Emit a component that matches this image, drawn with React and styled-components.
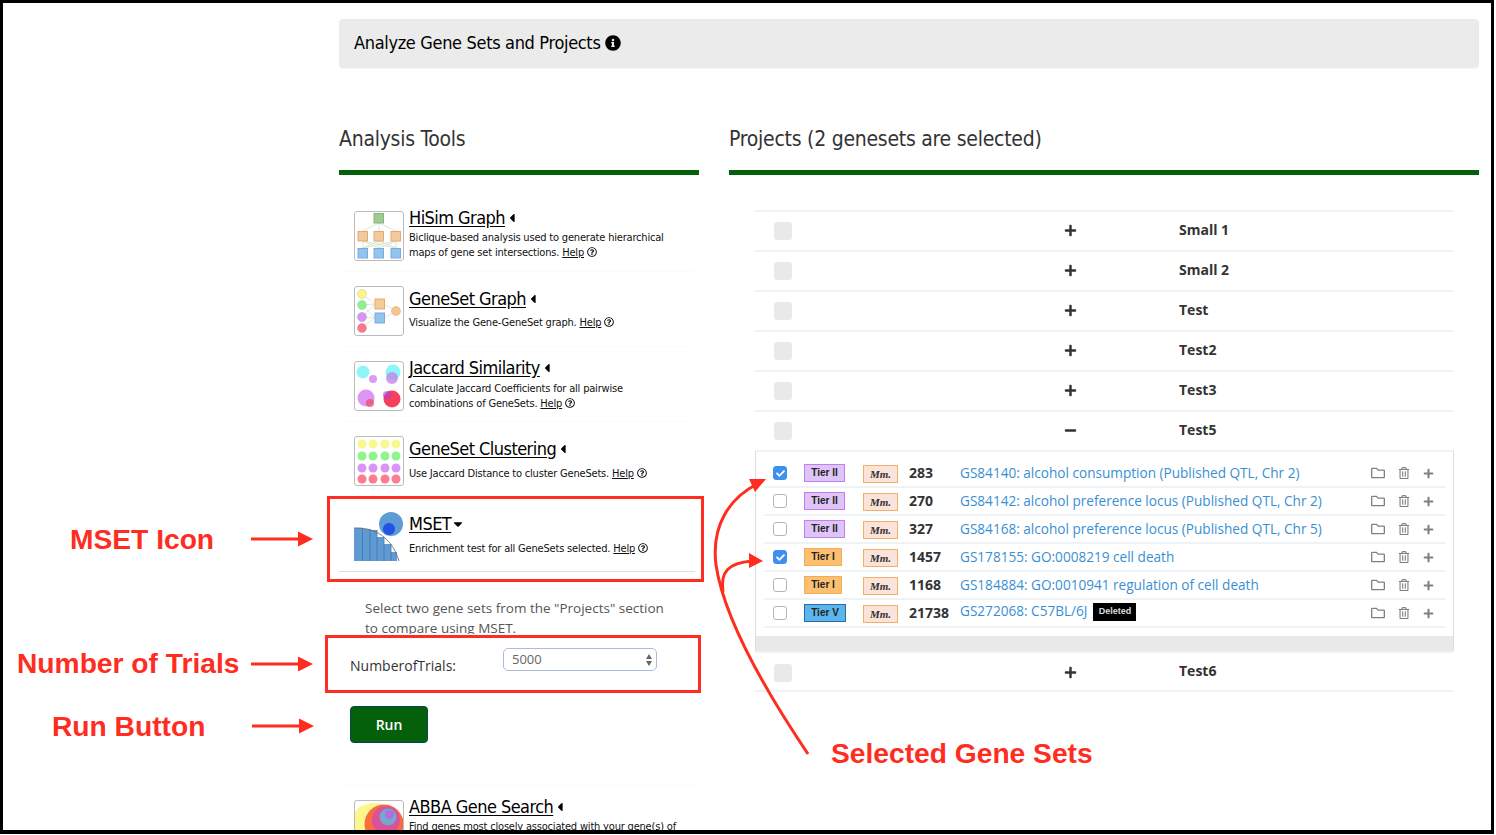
import React from "react";
import styled, { createGlobalStyle } from "styled-components";
import { FaInfoCircle, FaPlus, FaMinus, FaRegFolder, FaRegTrashAlt, FaCaretLeft, FaCaretDown, FaRegQuestionCircle, FaCheck } from "react-icons/fa";

const GlobalStyle = createGlobalStyle`
  html, body {
    margin: 0;
    padding: 0;
    background: #fff;
    overflow: hidden;
    font-family: "Open Sans", "Liberation Sans", sans-serif;
  }
  * { box-sizing: border-box; }
`;

const HEAD_FONT = `"DejaVu Sans Condensed", "DejaVu Sans", sans-serif`;
const GREEN = "#05600c";
const RED = "#ff2d1f";
const LINE = "#f0f3f6";

const tierColors = {
  "Tier I": { bg: "#fdc071", border: "#f0ad55", width: 38 },
  "Tier II": { bg: "#dfc4f7", border: "#c07ef0", width: 41 },
  "Tier V": { bg: "#5cb6ee", border: "#2f6aa5", width: 42 },
};

const Frame = styled.div`
  position: relative;
  width: 1494px;
  height: 834px;
  border: 3px solid #000;
  border-bottom-width: 4px;
  overflow: hidden;
  background: #fff;
`;

const Main = styled.main`
  width: 1140px;
  margin-left: 336px;
  padding-top: 16px;
`;

const Well = styled.div`
  display: flex;
  align-items: center;
  gap: 4px;
  height: 49px;
  padding: 0 0 2px 15px;
  background: #ebebeb;
  border-radius: 4px;
  box-shadow: 0 1px 1px rgba(0, 0, 0, 0.05);
  font-family: ${HEAD_FONT};
  font-stretch: condensed;
  font-size: 18px;
  letter-spacing: -0.33px;
  color: #000;
`;

const Columns = styled.div`
  display: grid;
  grid-template-columns: 360px 750px;
  gap: 30px;
  margin-top: 52px;
`;

const SectionTitle = styled.h2`
  margin: 0;
  height: 55px;
  padding-bottom: 12px;
  line-height: 38px;
  border-bottom: 5px solid ${GREEN};
  font-family: ${HEAD_FONT};
  font-stretch: condensed;
  font-weight: 400;
  font-size: 21px;
  letter-spacing: -0.26px;
  color: #333;
`;

const ToolList = styled.div`
  margin-top: 21px;
`;

const ToolCard = styled.section`
  height: ${(p) => p.$height || 75}px;
  padding: 15px 0 0 15px;
  border-radius: 8px;
  box-shadow: 0 1px 0 #fbfbfb;
`;

const ToolHead = styled.div`
  display: flex;
  gap: 5px;
`;

const IconBox = styled.div`
  flex: none;
  width: 50px;
  height: 50px;
  border: ${(p) => (p.$plain ? "none" : "1px solid #bbb")};
  border-radius: 3px;
  svg { display: block; }
`;

const ToolText = styled.div`
  padding-top: ${(p) => p.$top || 0}px;
`;

const ToolTitle = styled.div`
  display: flex;
  align-items: center;
  gap: 0;
  font-family: ${HEAD_FONT};
  font-stretch: condensed;
  font-size: 18px;
  letter-spacing: -0.55px;
  line-height: 14px;
  color: #000;
  a { color: #000; text-decoration: underline; text-underline-offset: 2px; }
  svg { font-size: 14px; }
`;

const ToolDesc = styled.p`
  margin: ${(p) => p.$gap || 6}px 0 0;
  font-family: ${HEAD_FONT};
  font-stretch: condensed;
  font-size: 11px;
  letter-spacing: -0.19px;
  line-height: 15px;
  color: #111;
  white-space: nowrap;
  a { color: #111; text-decoration: underline; }
  svg { font-size: 10px; margin-left: 3px; vertical-align: -1px; }
`;

const Divider = styled.hr`
  margin: 10px 4px 0 -15px;
  border: 0;
  border-top: 1px solid #ddd;
`;

const MsetHint = styled.p`
  margin: 26px 0 0 11px;
  width: 304px;
  height: 36px;
  overflow: hidden;
  font-size: 13.5px;
  line-height: 20px;
  color: #555;
`;

const TrialsRow = styled.div`
  display: grid;
  grid-template-columns: 153px 154px;
  align-items: start;
  margin: 14px 0 0 -4px;
  label { padding-top: 8px; font-size: 14px; line-height: 20px; color: #333; }
`;

const SelectBox = styled.div`
  position: relative;
  height: 23px;
  padding-left: 8px;
  border: 1px solid #a9bcd8;
  border-radius: 5px;
  font-size: 13px;
  line-height: 20px;
  color: #666;
  svg { position: absolute; right: 3px; top: 4px; }
`;

const RunButton = styled.button`
  display: block;
  width: 78px;
  height: 37px;
  margin: 30px 0 0 -4px;
  padding: 0;
  border: 1px solid #034a4a;
  border-radius: 4px;
  background: ${GREEN};
  color: #fff;
  font-family: "Open Sans", sans-serif;
  font-size: 14px;
  font-weight: 600;
`;

const ProjectTable = styled.div`
  width: 698px;
  margin: 35px 0 0 26px;
`;

const ProjectRow = styled.div`
  display: grid;
  grid-template-columns: 18px 273px 116px 1fr;
  align-items: center;
  height: 40px;
  padding-left: 19px;
  border-top: 2px solid ${LINE};
  &:last-child { height: 41px; padding-top: 2px; border-bottom: 2px solid ${LINE}; }
  svg { font-size: 13px; color: #333; margin-left: -1px; margin-top: -1px; }
`;

const GrayCheck = styled.span`
  width: 18px;
  height: 18px;
  border-radius: 3px;
  background: #e9e9e9;
`;

const ProjectName = styled.span`
  margin-top: -4px;
  margin-left: -2px;
  font-size: 14px;
  font-weight: 700;
  color: #333;
`;

const Panel = styled.div`
  width: 699px;
  padding-top: 8px;
  border-top: 2px solid ${LINE};
  border-left: 1px solid #ddd;
  border-right: 1px solid #ddd;
`;

const GeneRows = styled.div`
  margin: 0 8px;
  padding-bottom: 8px;
`;

const GeneRow = styled.div`
  display: grid;
  grid-template-columns: 31px 59px 46px 51px 1fr 74px;
  align-items: center;
  height: 28px;
  padding: 0 0 0 9px;
  border-bottom: 2px solid ${LINE};
`;

const CheckBox = styled.span`
  display: flex;
  align-items: center;
  justify-content: center;
  width: 14px;
  height: 14px;
  border-radius: 3px;
  background: ${(p) => (p.$on ? "#3d8ff0" : "#fff")};
  border: 1px solid ${(p) => (p.$on ? "#3d8ff0" : "#b5b5b5")};
  svg { font-size: 9px; color: #fff; }
`;

const TierBadge = styled.span`
  width: ${(p) => tierColors[p.$tier].width}px;
  height: 18px;
  margin-top: -1px;
  text-align: center;
  background: ${(p) => tierColors[p.$tier].bg};
  border: 1px solid ${(p) => tierColors[p.$tier].border};
  font-family: "Liberation Sans", sans-serif;
  font-size: 10px;
  font-weight: 700;
  line-height: 15px;
  color: #222;
`;

const SpeciesBadge = styled.span`
  width: 35px;
  height: 18px;
  margin-top: 2px;
  text-align: center;
  background: #fbe3da;
  border: 1px solid #eeb169;
  font-family: "Liberation Serif", serif;
  font-style: italic;
  font-size: 11px;
  font-weight: 700;
  line-height: 17px;
  color: #333;
`;

const GeneCount = styled.span`
  margin-top: -2px;
  font-size: 14px;
  font-weight: 700;
  color: #333;
`;

const GeneLink = styled.div`
  display: flex;
  align-items: center;
  margin-top: ${(p) => (p.$raised ? -6 : -2)}px;
  font-size: 13.6px;
  color: #3a8fd3;
  white-space: nowrap;
`;

const DeletedTag = styled.span`
  width: 43px;
  height: 18px;
  margin-left: 6px;
  margin-top: 4px;
  text-align: center;
  background: #000;
  color: #ddd;
  font-family: "Liberation Sans", sans-serif;
  font-size: 9px;
  font-weight: 700;
  line-height: 17px;
`;

const RowActions = styled.div`
  display: grid;
  grid-template-columns: 27px 25px 16px;
  align-items: center;
  svg { display: block; color: #808080; }
`;

const GrayBar = styled.div`
  height: 15px;
  background: #e9e9e9;
`;

const Overlay = styled.svg`
  position: absolute;
  left: -3px;
  top: -3px;
  pointer-events: none;
`;

const Callout = styled.div`
  position: absolute;
  left: ${(p) => p.$x - 3}px;
  top: ${(p) => p.$y - 3}px;
  color: ${RED};
  font-family: "Liberation Sans", sans-serif;
  font-weight: 700;
  font-size: 28.2px;
  line-height: 34px;
  white-space: nowrap;
`;

const MarkBox = styled.div`
  position: absolute;
  left: ${(p) => p.$x - 3}px;
  top: ${(p) => p.$y - 3}px;
  width: ${(p) => p.$w}px;
  height: ${(p) => p.$h}px;
  border: 3px solid ${RED};
  pointer-events: none;
`;

const HiSimIcon = () => (
  <svg width="48" height="48" viewBox="1 1 48 48">
    <g stroke="#cfe3c8" strokeWidth="0.8" fill="none">
      <path d="M25 12 9 20M25 12v8M25 12l17 8M9 30l16 7M9 30l33 7M25 30 9 37M25 30l17 7M42 30 9 37M42 30 25 37M9 30v7M25 30v7M42 30v7" />
    </g>
    <rect x="20" y="2.5" width="9.5" height="9.5" fill="#9ecb92" stroke="#85b87b" />
    {[4, 20, 37].map((x) => (
      <rect key={x} x={x} y="20.5" width="9.5" height="9.5" fill="#f0cc9c" stroke="#eba672" />
    ))}
    {[4, 20, 37].map((x) => (
      <rect key={x} x={x} y="37.5" width="9.5" height="9.5" fill="#92c5ec" stroke="#7aa8e4" />
    ))}
  </svg>
);

const GeneSetIcon = () => (
  <svg width="48" height="48" viewBox="1 1 48 48">
    <path d="M8 8 21 18M8 19 21 18M8 31 21 18M8 19 21 32M8 31 21 32M8 42 21 32M30 18 42 25M30 32 42 25" stroke="#cfe3c8" strokeWidth="0.8" />
    <circle cx="8" cy="8" r="4.5" fill="#f8f58c" stroke="#c9c98c" strokeWidth="0.5" />
    <circle cx="8" cy="19" r="4.5" fill="#8ff08f" stroke="#9fcf9f" strokeWidth="0.5" />
    <circle cx="8" cy="31" r="4.5" fill="#d995f2" stroke="#bb8fd0" strokeWidth="0.5" />
    <circle cx="8" cy="42" r="4.5" fill="#f9788c" stroke="#d08c9a" strokeWidth="0.5" />
    <rect x="21" y="13" width="9.5" height="10" fill="#f0cc9c" stroke="#eba672" />
    <rect x="21" y="27" width="9.5" height="10" fill="#92c5ec" stroke="#7aa8e4" />
    <circle cx="42" cy="25" r="4.5" fill="#f5c58f" stroke="#e0a878" strokeWidth="0.5" />
  </svg>
);

const JaccardIcon = () => (
  <svg width="48" height="48" viewBox="1 1 48 48">
    <circle cx="9" cy="11" r="6.5" fill="#8ff6f8" />
    <circle cx="19" cy="18" r="4" fill="#db9cf0" />
    <circle cx="39" cy="11" r="7.5" fill="#8ff6f8" />
    <circle cx="38" cy="17" r="6" fill="#c27ee8" fillOpacity="0.75" />
    <circle cx="12" cy="37" r="8.5" fill="#dc96f4" />
    <circle cx="16" cy="42" r="4" fill="#ee4f78" fillOpacity="0.8" />
    <circle cx="38" cy="38" r="8.5" fill="#f5405f" />
    <circle cx="33" cy="34" r="4" fill="#b03fd8" fillOpacity="0.6" />
  </svg>
);

const ClusterIcon = () => {
  const rows = [
    [8, "#f8f88f"],
    [20, "#8ef58e"],
    [32, "#db94f5"],
    [43, "#fb7d8f"],
  ];
  return (
    <svg width="48" height="48" viewBox="1 1 48 48">
      {rows.map(([y, fill]) =>
        [8, 19, 31, 42].map((x) => <circle key={`${x}-${y}`} cx={x} cy={y} r="4.5" fill={fill} />)
      )}
    </svg>
  );
};

const MsetIcon = () => (
  <svg width="50" height="52" viewBox="0 0 50 52">
    <path d="M0 17H9V18H16V19H23V26H30V33H37V41H43V50H0Z" fill="#5f9ad2" />
    <path d="M8.5 17V50M16 18V50M23 19V50M30 26V50M37 33V50" stroke="#3f77a8" strokeWidth="0.8" />
    <path d="M0 17C20 16 38 26 45 50" fill="none" stroke="#666" strokeWidth="0.8" />
    <circle cx="37" cy="13" r="12" fill="#5d9cd6" />
    <circle cx="35" cy="18" r="6" fill="#2451e6" />
  </svg>
);

const AbbaIcon = () => (
  <svg width="48" height="48" viewBox="1 1 48 48">
    <circle cx="19" cy="26" r="23" fill="#fbf78d" />
    <circle cx="30" cy="24" r="19.5" fill="#fa6b3d" />
    <circle cx="32" cy="20" r="14" fill="#d9519c" />
    <circle cx="34" cy="17" r="8.5" fill="#74a8cc" />
    <circle cx="35.5" cy="14.5" r="4.5" fill="#ae70e0" />
  </svg>
);

const Help = ({ text }) => (
  <>
    {text} <a href="#help">Help</a>
    <FaRegQuestionCircle />
  </>
);

const tools = [
  { title: "HiSim Graph", lines: ["Biclique-based analysis used to generate hierarchical", "maps of gene set intersections."], icon: <HiSimIcon />, gap: 5 },
  { title: "GeneSet Graph", lines: ["Visualize the Gene-GeneSet graph."], icon: <GeneSetIcon />, gap: 9, top: 6 },
  { title: "Jaccard Similarity", lines: ["Calculate Jaccard Coefficients for all pairwise", "combinations of GeneSets."], icon: <JaccardIcon />, gap: 6 },
  { title: "GeneSet Clustering", lines: ["Use Jaccard Distance to cluster GeneSets."], icon: <ClusterIcon />, gap: 10, top: 6 },
];

const ToolBody = ({ tool }) => (
  <ToolHead>
    <IconBox>{tool.icon}</IconBox>
    <ToolText $top={tool.top || 0}>
      <ToolTitle>
        <a href="#tool">{tool.title}</a>
        <FaCaretLeft />
      </ToolTitle>
      {tool.lines.length > 1 ? (
        <ToolDesc $gap={tool.gap}>
          {tool.lines[0]}
          <br />
          <Help text={tool.lines[1]} />
        </ToolDesc>
      ) : (
        <ToolDesc $gap={tool.gap}>
          <Help text={tool.lines[0]} />
        </ToolDesc>
      )}
    </ToolText>
  </ToolHead>
);

const genes = [
  { on: true, tier: "Tier II", count: 283, name: "GS84140: alcohol consumption (Published QTL, Chr 2)" },
  { tier: "Tier II", count: 270, name: "GS84142: alcohol preference locus (Published QTL, Chr 2)" },
  { tier: "Tier II", count: 327, name: "GS84168: alcohol preference locus (Published QTL, Chr 5)" },
  { on: true, tier: "Tier I", count: 1457, name: "GS178155: GO:0008219 cell death" },
  { tier: "Tier I", count: 1168, name: "GS184884: GO:0010941 regulation of cell death" },
  { tier: "Tier V", count: 21738, name: "GS272068: C57BL/6J", deleted: true },
];

const Project = ({ name, open }) => (
  <ProjectRow>
    <GrayCheck />
    <span />
    {open ? <FaMinus /> : <FaPlus />}
    <ProjectName>{name}</ProjectName>
  </ProjectRow>
);

const Arrow = ({ y, x1 = 251 }) => (
  <g>
    <path d={`M${x1} ${y}H${x1 + 48}`} stroke={RED} strokeWidth="3" />
    <path d={`M${x1 + 47} ${y - 7.5}L${x1 + 62} ${y}L${x1 + 47} ${y + 7.5}Z`} fill={RED} />
  </g>
);

export default function App() {
  return (
    <>
      <GlobalStyle />
      <Frame>
        <Main>
          <Well>
            Analyze Gene Sets and Projects <FaInfoCircle size={16} />
          </Well>
          <Columns>
            <div>
              <SectionTitle>Analysis Tools</SectionTitle>
              <ToolList>
                {tools.map((tool) => (
                  <ToolCard key={tool.title}>
                    <ToolBody tool={tool} />
                  </ToolCard>
                ))}
                <ToolCard $height={289}>
                  <ToolHead>
                    <IconBox $plain>
                      <MsetIcon />
                    </IconBox>
                    <ToolText $top={6}>
                      <ToolTitle>
                        <a href="#mset">MSET</a>
                        <FaCaretDown />
                      </ToolTitle>
                      <ToolDesc $gap={10}>
                        <Help text="Enrichment test for all GeneSets selected." />
                      </ToolDesc>
                    </ToolText>
                  </ToolHead>
                  <Divider />
                  <MsetHint>Select two gene sets from the "Projects" section to compare using MSET.</MsetHint>
                  <TrialsRow>
                    <label>NumberofTrials:</label>
                    <SelectBox>
                      5000
                      <svg width="8" height="14" viewBox="0 0 8 14">
                        <path d="M4 1 7 6H1ZM4 13 1 8H7Z" fill="#666" />
                      </svg>
                    </SelectBox>
                  </TrialsRow>
                  <RunButton>Run</RunButton>
                </ToolCard>
                <ToolCard>
                  <ToolBody
                    tool={{
                      title: "ABBA Gene Search",
                      lines: ["Find genes most closely associated with your gene(s) of", "interest."],
                      icon: <AbbaIcon />,
                      gap: 5,
                    }}
                  />
                </ToolCard>
              </ToolList>
            </div>
            <div>
              <SectionTitle>Projects (2 genesets are selected)</SectionTitle>
              <ProjectTable>
                {["Small 1", "Small 2", "Test", "Test2", "Test3"].map((name) => (
                  <Project key={name} name={name} />
                ))}
                <Project name="Test5" open />
                <Panel>
                  <GeneRows>
                    {genes.map((g) => (
                      <GeneRow key={g.name}>
                        <CheckBox $on={g.on}>{g.on && <FaCheck />}</CheckBox>
                        <TierBadge $tier={g.tier}>{g.tier}</TierBadge>
                        <SpeciesBadge>Mm.</SpeciesBadge>
                        <GeneCount>{g.count}</GeneCount>
                        <GeneLink $raised={g.deleted}>
                          {g.name}
                          {g.deleted && <DeletedTag>Deleted</DeletedTag>}
                        </GeneLink>
                        <RowActions>
                          <FaRegFolder size={14} />
                          <FaRegTrashAlt size={12} />
                          <FaPlus size={11} />
                        </RowActions>
                      </GeneRow>
                    ))}
                  </GeneRows>
                  <GrayBar />
                </Panel>
                <Project name="Test6" />
              </ProjectTable>
            </div>
          </Columns>
        </Main>

        <MarkBox $x={327} $y={496} $w={377} $h={86} />
        <MarkBox $x={325} $y={635} $w={376} $h={58} />
        <Callout $x={70} $y={522}>MSET Icon</Callout>
        <Callout $x={17} $y={646}>Number of Trials</Callout>
        <Callout $x={52} $y={709}>Run Button</Callout>
        <Callout $x={831} $y={736}>Selected Gene Sets</Callout>
        <Overlay width="1496" height="835" viewBox="0 0 1496 835">
          <Arrow y={539} />
          <Arrow y={664} />
          <Arrow y={726} x1={252} />
          <path d="M808 754C775 705 725 625 716 565C711 525 730 498 757 484" fill="none" stroke={RED} strokeWidth="3" />
          <path d="M766 479 749 479 755 492Z" fill={RED} />
          <path d="M723 592C720 572 728 563 752 561" fill="none" stroke={RED} strokeWidth="3" />
          <path d="M763 561 749 553 749 568Z" fill={RED} />
        </Overlay>
      </Frame>
    </>
  );
}
